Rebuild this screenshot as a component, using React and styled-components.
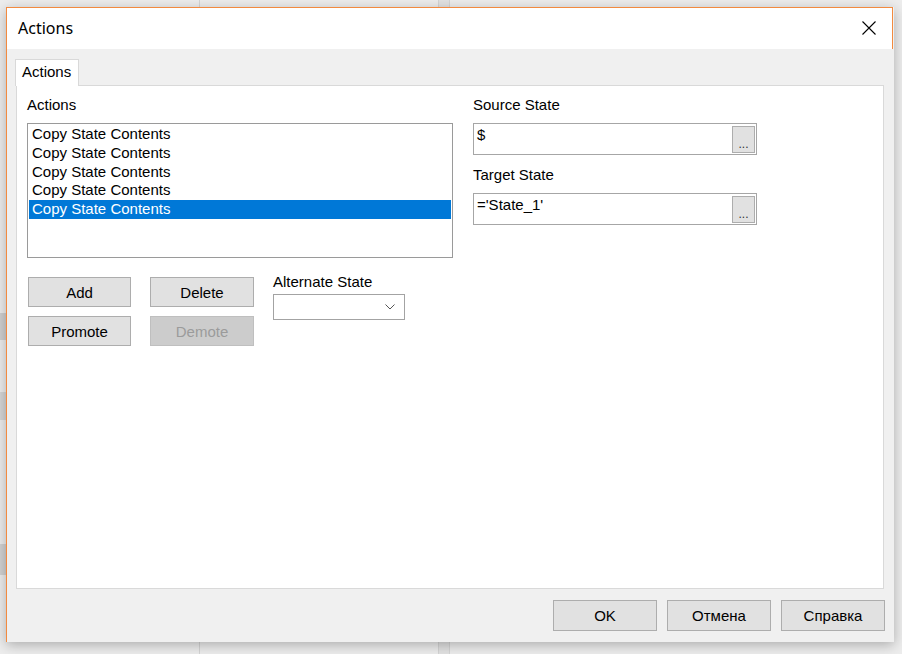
import React from 'react';
import styled, { createGlobalStyle } from 'styled-components';

const GlobalStyle = createGlobalStyle`
  html, body {
    margin: 0;
    padding: 0;
    width: 902px;
    height: 654px;
    overflow: hidden;
  }
  body {
    font-family: "Liberation Sans", Arial, sans-serif;
    background: #ededed;
  }
`

const Desktop = styled.div`
  width: 902px;
  height: 654px;
  box-sizing: border-box;
  padding: 7px 0 0 6px;
  background:
    linear-gradient(90deg, transparent 199px, #d4d4d4 199px, #d4d4d4 200px, transparent 200px),
    linear-gradient(90deg, transparent 438px, #d4d4d4 438px, #d4d4d4 439px, #e2e2e2 439px, #e2e2e2 449px, #d4d4d4 449px, #d4d4d4 450px, transparent 450px),
    linear-gradient(180deg, transparent 313px, #d0d0d0 313px, #d0d0d0 340px, transparent 340px, transparent 392px, #d6d6d6 392px, #d6d6d6 420px, transparent 420px, transparent 544px, #d2d2d2 544px, #d2d2d2 575px, transparent 575px),
    #ededed;
  background-size: 100% 100%, 100% 100%, 6px 100%, 100% 100%;
  background-repeat: no-repeat;
`

const Dialog = styled.div`
  width: 888px;
  height: 635px;
  box-sizing: border-box;
  background: #f0f0f0;
  border-left: 1px solid #f28a3f;
  display: flex;
  flex-direction: column;
  box-shadow: 0 3px 12px rgba(0, 0, 0, 0.28);
`

const TitleBar = styled.div`
  height: 42px;
  box-sizing: border-box;
  margin-right: 1px;
  background: #ffffff;
  border-top: 1px solid #f28a3f;
  border-right: 1px solid #f28a3f;
  display: flex;
  align-items: center;
  justify-content: space-between;
  padding-left: 11px;
`

const Title = styled.span`
  font-family: "Noto Sans", "Open Sans", sans-serif;
  font-size: 16px;
  color: #000;
  margin-top: -2px;
`

const CloseButton = styled.button`
  width: 46px;
  height: 100%;
  border: none;
  background: transparent;
  padding: 0;
  display: flex;
  align-items: center;
  justify-content: center;
  margin-top: -2px;
`

const Body = styled.div`
  flex: 1;
  display: flex;
  flex-direction: column;
  padding: 10px 9px 11px 8px;
`

const TabStrip = styled.div`
  display: flex;
  height: 26px;
`

const Tab = styled.div`
  position: relative;
  z-index: 1;
  width: 64px;
  height: 27px;
  box-sizing: border-box;
  background: #ffffff;
  border: 1px solid #d9d9d9;
  border-bottom: none;
  font-size: 15px;
  padding: 3px 0 0 6px;
  color: #000;
`

const Panel = styled.div`
  height: 504px;
  box-sizing: border-box;
  margin: 0 1px 0 1px;
  background: #ffffff;
  border: 1px solid #d9d9d9;
  padding: 10px 10px 0 10px;
  display: flex;
  gap: 20px;
`

const Column = styled.div`
  display: flex;
  flex-direction: column;
  width: ${p => p.$width}px;
`

const Label = styled.div`
  font-size: 15px;
  line-height: 17px;
  color: #000;
  margin-top: ${p => p.$top || 0}px;
  margin-bottom: ${p => p.$bottom ?? 10}px;
  white-space: nowrap;
`

const ListBox = styled.div`
  height: 135px;
  box-sizing: border-box;
  border: 1px solid #9a9a9a;
  padding: 1px;
  background: #fff;
`

const ListItem = styled.div`
  height: 18.75px;
  line-height: 18.75px;
  font-size: 15px;
  padding-left: 3px;
  color: ${p => (p.$selected ? '#ffffff' : '#000')};
  background: ${p => (p.$selected ? '#0078d7' : 'transparent')};
  white-space: nowrap;
`

const Controls = styled.div`
  display: flex;
  gap: 19px;
  margin-top: 19px;
  padding-left: 1px;
`

const ButtonGrid = styled.div`
  display: grid;
  grid-template-columns: 103px 104px;
  grid-auto-rows: 30px;
  column-gap: 19px;
  row-gap: 9px;
`

const Button = styled.button`
  box-sizing: border-box;
  width: ${p => (p.$width ? `${p.$width}px` : '100%')};
  height: ${p => (p.$height ? `${p.$height}px` : '100%')};
  border: 1px solid ${p => (p.disabled ? '#bfbfbf' : '#adadad')};
  background: ${p => (p.disabled ? '#cccccc' : '#e1e1e1')};
  color: ${p => (p.disabled ? '#9b9b9b' : '#000')};
  font-family: "Liberation Sans", Arial, sans-serif;
  font-size: 15px;
  padding: 0;
  margin: 0;
`

const AltGroup = styled.div`
  display: flex;
  flex-direction: column;
  margin-top: -4px;
`

const Select = styled.div`
  width: 132px;
  height: 26px;
  box-sizing: border-box;
  border: 1px solid #a3a3a3;
  background: #fff;
  display: flex;
  align-items: center;
  justify-content: flex-end;
  padding-right: 9px;
`

const Field = styled.div`
  height: 32px;
  box-sizing: border-box;
  border: 1px solid #a6a6a6;
  background: #fff;
  display: flex;
  justify-content: space-between;
  padding: 0 1px 1px 3px;
`

const FieldText = styled.span`
  font-size: 15px;
  line-height: 17px;
  padding-top: 2px;
  color: #000;
  white-space: nowrap;
`

const EllipsisButton = styled.button`
  align-self: flex-end;
  width: 23px;
  height: 27px;
  box-sizing: border-box;
  border: 1px solid #adadad;
  background: #e1e1e1;
  padding: 0 0 4px;
  display: flex;
  align-items: flex-end;
  justify-content: center;
  font-family: "Liberation Sans", Arial, sans-serif;
  font-size: 12px;
  line-height: 8px;
  color: #333;
`

const Footer = styled.div`
  display: flex;
  justify-content: flex-end;
  gap: 10px;
  margin-top: 11px;
  padding-right: 0;
`

const items = ['Copy State Contents', 'Copy State Contents', 'Copy State Contents', 'Copy State Contents', 'Copy State Contents'];

export default function App() {
  return (
    <>
      <GlobalStyle />
      <Desktop>
        <Dialog>
          <TitleBar>
            <Title>Actions</Title>
            <CloseButton aria-label="Close">
              <svg width="16" height="16" viewBox="0 0 16 16">
                <path d="M1.5 1.5 L14.5 14.5 M14.5 1.5 L1.5 14.5" stroke="#000" strokeWidth="1.1" fill="none" />
              </svg>
            </CloseButton>
          </TitleBar>
          <Body>
            <TabStrip>
              <Tab>Actions</Tab>
            </TabStrip>
            <Panel>
              <Column $width={426}>
                <Label>Actions</Label>
                <ListBox>
                  {items.map((t, i) => (
                    <ListItem key={i} $selected={i === 4}>{t}</ListItem>
                  ))}
                </ListBox>
                <Controls>
                  <ButtonGrid>
                    <Button>Add</Button>
                    <Button>Delete</Button>
                    <Button>Promote</Button>
                    <Button disabled>Demote</Button>
                  </ButtonGrid>
                  <AltGroup>
                    <Label $bottom={4}>Alternate State</Label>
                    <Select>
                      <svg width="10" height="6" viewBox="0 0 10 6">
                        <path d="M0.5 0.5 L5 5 L9.5 0.5" stroke="#555" strokeWidth="1" fill="none" />
                      </svg>
                    </Select>
                  </AltGroup>
                </Controls>
              </Column>
              <Column $width={284}>
                <Label>Source State</Label>
                <Field>
                  <FieldText>$</FieldText>
                  <EllipsisButton>...</EllipsisButton>
                </Field>
                <Label $top={11}>Target State</Label>
                <Field>
                  <FieldText>='State_1'</FieldText>
                  <EllipsisButton>...</EllipsisButton>
                </Field>
              </Column>
            </Panel>
            <Footer>
              <Button $width={104} $height={31}>OK</Button>
              <Button $width={104} $height={31}>Отмена</Button>
              <Button $width={104} $height={31}>Справка</Button>
            </Footer>
          </Body>
        </Dialog>
      </Desktop>
    </>
  );
}
